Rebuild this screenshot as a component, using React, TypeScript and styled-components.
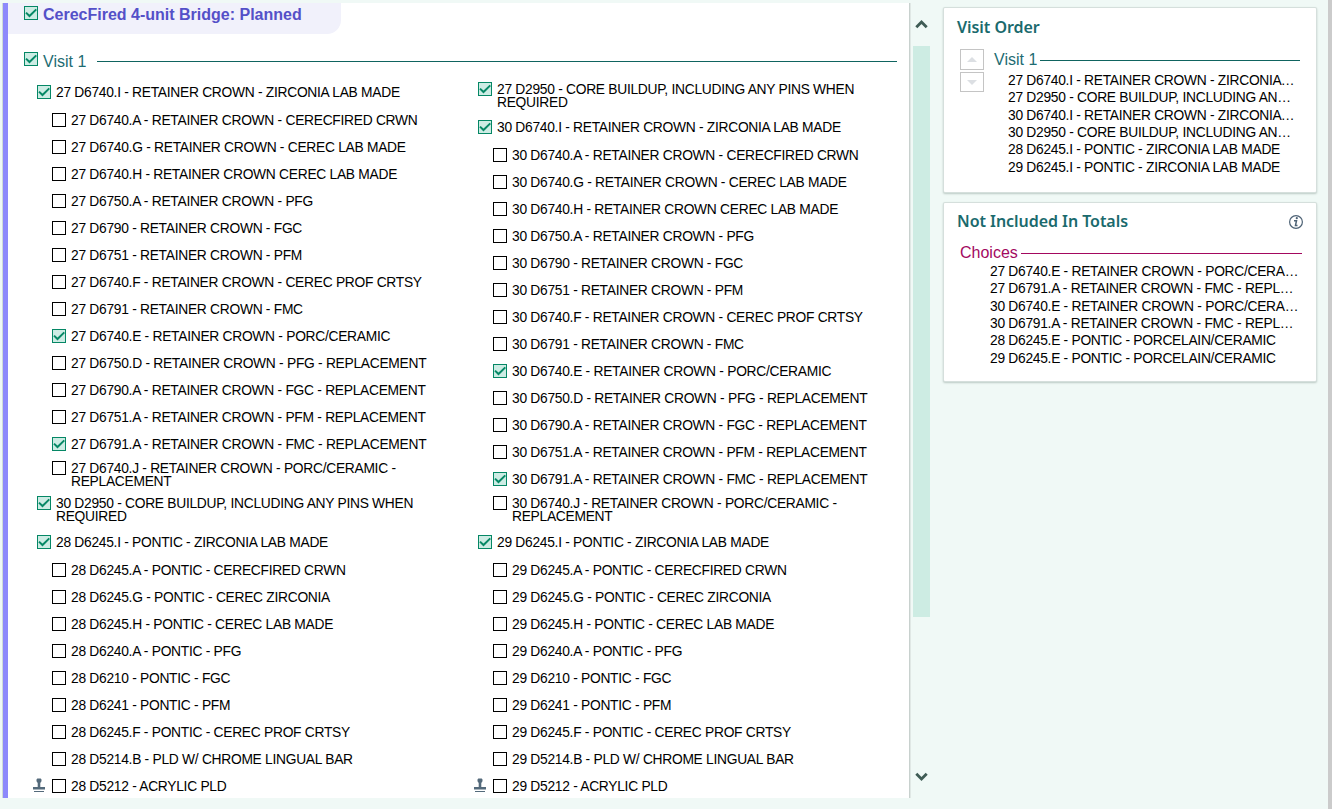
import React from "react";
import styled, { createGlobalStyle } from "styled-components";

const GlobalStyle = createGlobalStyle`
  * { box-sizing: border-box; }
  body {
    margin: 0;
    background: #f0f9f6;
    font-family: "Liberation Sans", Arial, sans-serif;
    font-size: 13.8px;
    color: #000;
  }
`;

const Page = styled.div`
  display: flex;
  width: 1332px;
  height: 809px;
  overflow: hidden;
  border-right: 4px solid #cbcbcb;
  padding-left: 3px;
`;

const PlanPanel = styled.main`
  width: 906px;
  height: 795px;
  margin-top: 3px;
  background: #fff;
  border-left: 5px solid #8d89fb;
  box-shadow: 1px 0 0 #c8d1ce, 2px 0 0 #e0e8e5, -1px 0 0 #cfdbd8;
  overflow: hidden;
  flex: none;
`;

const PlanHeader = styled.header`
  display: flex;
  width: 333px;
  height: 31px;
  padding: 3px 0 0 16px;
  background: #f1f1fb;
  border-bottom-right-radius: 14px;
`;

const PlanTitle = styled.h1`
  margin: 0 0 0 5px;
  font-size: 16px;
  line-height: 18px;
  font-weight: 700;
  color: #5450c8;
  white-space: nowrap;
`;

const VisitHeader = styled.div`
  display: flex;
  padding: 18px 12px 0 16px;
  height: 44px;
`;

const VisitTitle = styled.h2<{ $color?: string }>`
  margin: 0;
  font-size: 16px;
  line-height: 18px;
  font-weight: 400;
  white-space: nowrap;
  color: ${(p) => p.$color ?? "#1d6c72"};
`;

const VisitName = styled(VisitTitle)`
  width: 54px;
  margin: 1px 0 0 5px;
`;

const Rule = styled.div<{ $color?: string; $top: number }>`
  flex: 1;
  height: 1px;
  margin-top: ${(p) => p.$top}px;
  background: ${(p) => p.$color ?? "#0f6460"};
`;

const Columns = styled.div`
  display: grid;
  grid-template-columns: 441px 441px;
  grid-template-rows: 450px auto;
`;

const Cell = styled.div`
  padding-left: 29px;
`;

const ItemRow = styled.div<{ $child: boolean; $wrapped: boolean }>`
  display: flex;
  align-items: flex-start;
  height: ${(p) => (p.$wrapped ? 35 : p.$child ? 27 : 28)}px;
  padding-top: ${(p) => (p.$wrapped ? 4 : 7)}px;
  padding-left: ${(p) => (p.$child ? 15 : 0)}px;
  white-space: nowrap;
`;

const ItemText = styled.span`
  width: 366px;
  margin: 1px 0 0 5px;
  line-height: 13px;
  letter-spacing: -0.28px;
  white-space: normal;
`;

const Box = styled.span<{ $checked: boolean }>`
  flex: none;
  display: flex;
  width: 14px;
  height: 14px;
  border: 1px solid ${(p) => (p.$checked ? "#058765" : "#000")};
  background: ${(p) => (p.$checked ? "#cdece4" : "#fff")};
`;

const StampSlot = styled.span`
  display: flex;
  margin: -1px 6px 0 -20px;
`;

const Scrollbar = styled.div`
  flex: none;
  display: flex;
  flex-direction: column;
  align-items: center;
  width: 17px;
  height: 789px;
  margin: 0 0 0 4px;
  padding-top: 19px;
`;

const Thumb = styled.div`
  width: 17px;
  height: 571px;
  margin: 17px 0 155px;
  background: #cdece3;
`;

const Sidebar = styled.aside`
  display: flex;
  flex-direction: column;
  gap: 11px;
  width: 372px;
  margin: 8px 0 0 14px;
`;

const Card = styled.section<{ $height: number }>`
  height: ${(p) => p.$height}px;
  background: #fff;
  border-radius: 1px;
  box-shadow: 0 0 0 1px #d5dfdc, 0 1px 2px 1px #bccac5;
`;

const CardHead = styled.div<{ $top: number }>`
  display: flex;
  justify-content: space-between;
  align-items: flex-start;
  height: 41px;
  padding: ${(p) => p.$top}px 13px 0;
`;

const CardTitle = styled.h2`
  margin: 0;
  font-family: "Noto Sans", "Open Sans", sans-serif;
  font-size: 16px;
  line-height: 22px;
  font-weight: 600;
  letter-spacing: -0.05px;
  color: #1a6a6d;
`;

const CardBody = styled.div`
  display: flex;
  padding-left: 16px;
`;

const OrderButtons = styled.div`
  display: flex;
  flex-direction: column;
  gap: 2px;
  width: 34px;
`;

const OrderButton = styled.button<{ $height: number }>`
  display: flex;
  align-items: center;
  justify-content: center;
  width: 24px;
  height: ${(p) => p.$height}px;
  padding: 0;
  border: 1px solid #c4c4c4;
  background: #fff;
`;

const Group = styled.div<{ $width: number }>`
  width: ${(p) => p.$width}px;
`;

const GroupHead = styled.div<{ $drop?: number }>`
  display: flex;
  gap: 3px;

  h2 {
    padding-top: ${(p) => p.$drop ?? 0}px;
  }
`;

const SummaryList = styled.ul<{ $indent: number; $top: number; $end: number }>`
  margin: ${(p) => p.$top}px 0 0;
  padding: 0 ${(p) => p.$end}px 0 ${(p) => p.$indent}px;
  list-style: none;
`;

const SummaryItem = styled.li`
  height: 17.33px;
  line-height: 17.33px;
  letter-spacing: -0.28px;
  overflow: hidden;
  text-overflow: ellipsis;
  white-space: nowrap;
`;

function CheckBox({ checked }: { checked: boolean }) {
  return (
    <Box $checked={checked}>
      {checked && (
        <svg width="12" height="12" viewBox="0 0 12 12">
          <path d="M1 5.6 L4.5 9 L11.300 2.400" fill="none" stroke="#078866" strokeWidth="2" />
        </svg>
      )}
    </Box>
  );
}

function Stamp() {
  return (
    <StampSlot>
      <svg width="14" height="15" viewBox="0 0 14 15" fill="#546a7b">
        <path d="M5.300 0.500h3.400l.8 1v1.800L8.300 5v4H13V11.500H1V9h4.700V5L4.500 3.300V1.500z" />
        <rect x="2" y="13" width="10" height="1" />
      </svg>
    </StampSlot>
  );
}

function Chevron({ down = false }: { down?: boolean }) {
  return (
    <svg width="13" height="10" viewBox="0 0 13 10">
      <path
        d={down ? "M1.300 1.700 L6.500 7 L11.700 1.700" : "M1.300 8.300 L6.500 3 L11.700 8.300"}
        fill="none"
        stroke="#3f5c55"
        strokeWidth="2.800"
      />
    </svg>
  );
}

type Item = { text: string; child?: boolean; on?: boolean; wrapped?: boolean; stamp?: boolean };

const crownChoices = (n: number): Item[] => [
  { text: `${n} D6740.I - RETAINER CROWN - ZIRCONIA LAB MADE`, on: true },
  ...[
    "D6740.A - RETAINER CROWN - CERECFIRED CRWN",
    "D6740.G - RETAINER CROWN - CEREC LAB MADE",
    "D6740.H - RETAINER CROWN CEREC LAB MADE",
    "D6750.A - RETAINER CROWN - PFG",
    "D6790 - RETAINER CROWN - FGC",
    "D6751 - RETAINER CROWN - PFM",
    "D6740.F - RETAINER CROWN - CEREC PROF CRTSY",
    "D6791 - RETAINER CROWN - FMC",
    "D6740.E - RETAINER CROWN - PORC/CERAMIC",
    "D6750.D - RETAINER CROWN - PFG - REPLACEMENT",
    "D6790.A - RETAINER CROWN - FGC - REPLACEMENT",
    "D6751.A - RETAINER CROWN - PFM - REPLACEMENT",
    "D6791.A - RETAINER CROWN - FMC - REPLACEMENT",
  ].map((t, i) => ({ text: `${n} ${t}`, child: true, on: i === 8 || i === 12 })),
  { text: `${n} D6740.J - RETAINER CROWN - PORC/CERAMIC - REPLACEMENT`, child: true, wrapped: true },
];

const buildup = (n: number): Item => ({
  text: `${n} D2950 - CORE BUILDUP, INCLUDING ANY PINS WHEN REQUIRED`,
  on: true,
  wrapped: true,
});

const ponticChoices = (n: number): Item[] => [
  { text: `${n} D6245.I - PONTIC - ZIRCONIA LAB MADE`, on: true },
  ...[
    "D6245.A - PONTIC - CERECFIRED CRWN",
    "D6245.G - PONTIC - CEREC ZIRCONIA",
    "D6245.H - PONTIC - CEREC LAB MADE",
    "D6240.A - PONTIC - PFG",
    "D6210 - PONTIC - FGC",
    "D6241 - PONTIC - PFM",
    "D6245.F - PONTIC - CEREC PROF CRTSY",
    "D5214.B - PLD W/ CHROME LINGUAL BAR",
    "D5212 - ACRYLIC PLD",
  ].map((t, i) => ({ text: `${n} ${t}`, child: true, stamp: i === 8 })),
];

const cells: Item[][] = [
  [...crownChoices(27), buildup(30)],
  [buildup(27), ...crownChoices(30)],
  ponticChoices(28),
  ponticChoices(29),
];

const visitOrder = [
  "27 D6740.I - RETAINER CROWN - ZIRCONIA LAB MADE",
  "27 D2950 - CORE BUILDUP, INCLUDING ANY PINS WHEN REQUIRED",
  "30 D6740.I - RETAINER CROWN - ZIRCONIA LAB MADE",
  "30 D2950 - CORE BUILDUP, INCLUDING ANY PINS WHEN REQUIRED",
  "28 D6245.I - PONTIC - ZIRCONIA LAB MADE",
  "29 D6245.I - PONTIC - ZIRCONIA LAB MADE",
];

const excluded = [
  "27 D6740.E - RETAINER CROWN - PORC/CERAMIC",
  "27 D6791.A - RETAINER CROWN - FMC - REPLACEMENT",
  "30 D6740.E - RETAINER CROWN - PORC/CERAMIC",
  "30 D6791.A - RETAINER CROWN - FMC - REPLACEMENT",
  "28 D6245.E - PONTIC - PORCELAIN/CERAMIC",
  "29 D6245.E - PONTIC - PORCELAIN/CERAMIC",
];

export default function App() {
  return (
    <>
      <GlobalStyle />
      <Page>
        <PlanPanel>
          <PlanHeader>
            <CheckBox checked />
            <PlanTitle>CerecFired 4-unit Bridge: Planned</PlanTitle>
          </PlanHeader>
          <VisitHeader>
            <CheckBox checked />
            <VisitName>Visit 1</VisitName>
            <Rule $top={9} />
          </VisitHeader>
          <Columns>
            {cells.map((items, c) => (
              <Cell key={c}>
                {items.map((it) => (
                  <ItemRow key={it.text} $child={!!it.child} $wrapped={!!it.wrapped}>
                    {it.stamp && <Stamp />}
                    <CheckBox checked={!!it.on} />
                    <ItemText>{it.text}</ItemText>
                  </ItemRow>
                ))}
              </Cell>
            ))}
          </Columns>
        </PlanPanel>
        <Scrollbar>
          <Chevron />
          <Thumb />
          <Chevron down />
        </Scrollbar>
        <Sidebar>
          <Card $height={184}>
            <CardHead $top={8}>
              <CardTitle>Visit Order</CardTitle>
            </CardHead>
            <CardBody>
              <OrderButtons>
                <OrderButton $height={21} aria-label="Move up">
                  <svg width="10" height="5" viewBox="0 0 10 5"><path d="M0 5L5 0l5 5z" fill="#dcdfe3" /></svg>
                </OrderButton>
                <OrderButton $height={20} aria-label="Move down">
                  <svg width="10" height="5" viewBox="0 0 10 5"><path d="M0 0L5 5l5-5z" fill="#dcdfe3" /></svg>
                </OrderButton>
              </OrderButtons>
              <Group $width={306}>
                <GroupHead $drop={2}>
                  <VisitTitle>Visit 1</VisitTitle>
                  <Rule $top={11} />
                </GroupHead>
                <SummaryList $indent={14} $top={3} $end={4}>
                  {visitOrder.map((t) => <SummaryItem key={t}>{t}</SummaryItem>)}
                </SummaryList>
              </Group>
            </CardBody>
          </Card>
          <Card $height={178}>
            <CardHead $top={7}>
              <CardTitle>Not Included In Totals</CardTitle>
              <svg width="14" height="24" viewBox="0 0 14 24">
                <circle cx="7" cy="12" r="6.400" fill="none" stroke="#4e6376" strokeWidth="1.200" />
                <path d="M5 10.700h2.500L6.500 15.400h2" fill="none" stroke="#4e6376" strokeWidth="1.500" />
                <circle cx="7.800" cy="8.200" r="1.100" fill="#4e6376" />
              </svg>
            </CardHead>
            <CardBody>
              <Group $width={342}>
                <GroupHead>
                  <VisitTitle $color="#a3085f">Choices</VisitTitle>
                  <Rule $top={9} $color="#a3085f" />
                </GroupHead>
                <SummaryList $indent={30} $top={1} $end={2}>
                  {excluded.map((t) => <SummaryItem key={t}>{t}</SummaryItem>)}
                </SummaryList>
              </Group>
            </CardBody>
          </Card>
        </Sidebar>
      </Page>
    </>
  );
}
